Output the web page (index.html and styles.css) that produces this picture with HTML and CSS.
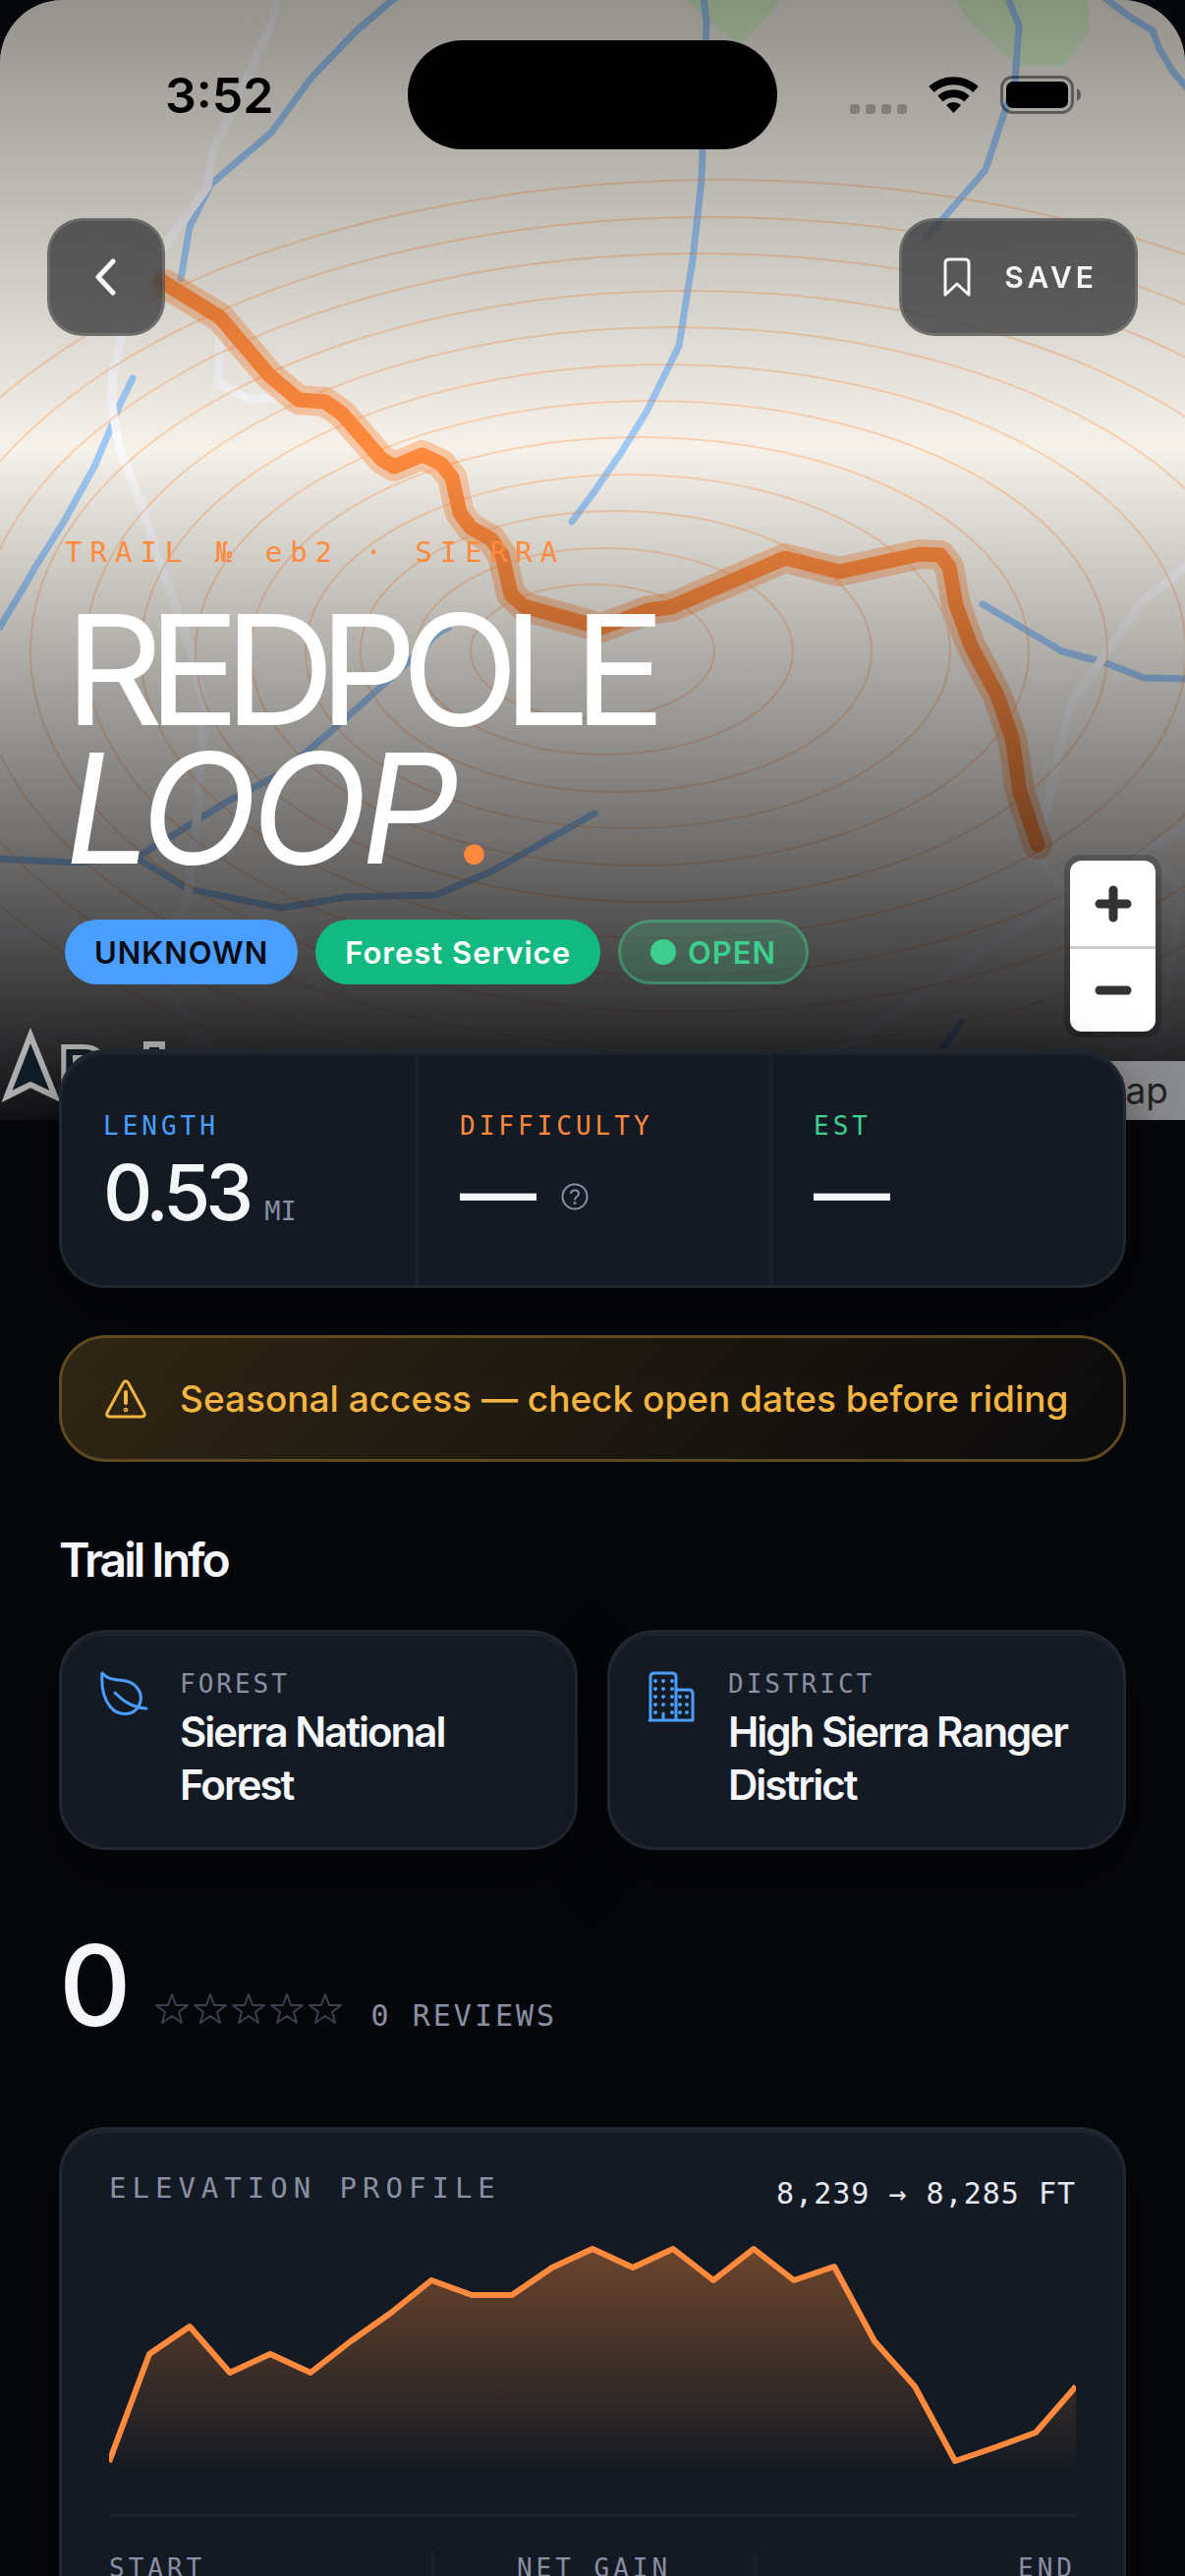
FILE: index.html
```html
<!DOCTYPE html>
<html lang="en">
<head>
  <meta charset="UTF-8">
  <meta name="viewport" content="width=device-width, initial-scale=1">
  <title>Redpole Loop</title>
  <link rel="stylesheet" href="styles.css">
</head>
<body>
<div class="screen">
  <header class="hero">
    <!-- Map -->
    <svg class="map" viewBox="0 0 1206 1140" preserveAspectRatio="xMidYMid slice" aria-hidden="true">
      <rect width="1206" height="1140" fill="#f6f2ea"/>
      <g class="woods">
        <path d="M699 0H795L755 46L747 43Z"/>
        <path d="M974 0L984 20L1034 67H1081L1109 33L1107 0Z"/>
      </g>
      <g class="river">
        <path d="M404 -4L363 31L317 79L276 135L215 187L193 231L184 284"/>
        <path d="M135 385L121 414L111 440L96 475L65 531L36 577L24 598L0 638"/>
        <path d="M716 -4L719 24L715 152L714 183L705 264L691 352L658 419L632 461L603 503L582 531"/>
        <path d="M1025 -4L1037 26L1033 83L1022 115L1003 173L940 245"/>
        <path d="M1122 -4L1151 18L1173 31L1180 50L1193 72L1212 94"/>
        <path d="M1000 615L1081 663L1126 675L1164 690L1212 691"/>
        <path d="M456 639Q440 646 434 657L369 716L329 751L286 787L231 816L142 871L79 878L-4 874"/>
        <path d="M142 875L192 905L286 924L354 913L444 911L500 887L605 828"/>
        <path d="M978 1040L950 1080"/>
      </g>
      <g class="road">
        <path d="M281 -4L278 20L250 83L216 155L211 190L168 250L135 295L123 342L115 381L114 414L122 457L144 514L165 580L192 655L208 720L200 838L192 906L183 936L150 985L180 1020L215 1080"/>
        <path d="M224 335L222 390L254 407L290 403"/>
        <path d="M467 480L485 530L500 560"/>
        <path d="M1212 572L1163 612L1090 716L1063 830L1057 875L1084 908"/>
        <path d="M1212 838L1084 914L961 993L857 1069"/>
        <path d="M1160 880Q1200 880 1200 920L1180 1080"/>
        <path d="M-4 953L96 940L183 936"/>
      </g>
      <g class="contour">
        <ellipse cx="603" cy="663" rx="124" ry="68"/>
        <ellipse cx="615" cy="663" rx="192" ry="105"/>
        <ellipse cx="627" cy="663" rx="260" ry="143"/>
        <ellipse cx="639" cy="663" rx="328" ry="180"/>
        <ellipse cx="651" cy="663" rx="396" ry="218"/>
        <ellipse cx="663" cy="663" rx="464" ry="255"/>
        <ellipse cx="675" cy="663" rx="532" ry="292"/>
        <ellipse cx="687" cy="663" rx="600" ry="330"/>
        <ellipse cx="699" cy="663" rx="668" ry="367"/>
        <ellipse cx="711" cy="663" rx="736" ry="405"/>
        <ellipse cx="723" cy="663" rx="804" ry="442"/>
        <ellipse cx="735" cy="663" rx="872" ry="480"/>
      </g>
      <path class="trail-halo" d="M168 289L224 323L274 382L304 407L331 409L348 421L388 467L401 475L430 463L449 472L460 486L468 522L479 537L500 549L511 565L520 605L533 617L612 639L660 621L683 618L799 568L854 582L936 564L957 565L966 577L973 616L988 657L1015 708L1030 751L1038 806L1056 860"/>
      <path class="trail" d="M164 286L224 323L274 382L304 407L331 409L348 421L388 467L401 475L430 463L449 472L460 486L468 522L479 537L500 549L511 565L520 605L533 617L612 639L660 621L683 618L799 568L854 582L936 564L957 565L966 577L973 616L988 657L1015 708L1030 751L1038 806L1056 860"/>
    </svg>
    <div class="shade"></div>

    <!-- Map provider mark -->
    <svg class="map-logo" width="180" height="100" viewBox="0 0 180 100" aria-hidden="true">
      <path d="M31 14L56 76L31 64L7 76Z"/>
      <text x="61" y="80">R</text>
      <path d="M149 78V23H165V78Z"/>
    </svg>
    <a class="attribution" href="#">Map</a>

    <div class="statusbar">
      <span class="time">3:52</span>
      <span class="island"></span>
      <div class="status-icons">
        <span class="dots"><i></i><i></i><i></i><i></i></span>
        <svg width="51" height="37" viewBox="0 0 51 37">
          <path d="M3 13A33 33 0 0 1 48 13M12 22.5A20 20 0 0 1 39 22.5" fill="none" stroke="#000" stroke-width="8"/>
          <path d="M25.500 37L18 29A11 11 0 0 1 33 29Z"/>
        </svg>
        <svg width="82" height="39" viewBox="0 0 82 39">
          <rect x="1.500" y="1.500" width="72" height="36" rx="11" fill="none" stroke="#000" stroke-opacity=".45" stroke-width="3"/>
          <rect x="6" y="6" width="63" height="27" rx="7"/>
          <path d="M78 13Q82 15 82 19.500Q82 24 78 26Z" fill-opacity=".45"/>
        </svg>
      </div>
    </div>

    <nav class="topnav">
      <button class="glass back" type="button" aria-label="Back">
        <svg width="22" height="38" viewBox="0 0 22 38"><path d="M18 3L3 19L18 35"/></svg>
      </button>
      <button class="glass save" type="button">
        <svg width="28" height="40" viewBox="0 0 28 40"><path d="M2 38V6Q2 2 6 2H22Q26 2 26 6V38L14 27Z"/></svg>
        SAVE
      </button>
    </nav>

    <div class="headline">
      <p class="eyebrow">TRAIL № eb2 · SIERRA</p>
      <h1>REDPOLE<br><em>LOOP</em><span class="dot">.</span></h1>
      <div class="pills">
        <span class="pill unknown">UNKNOWN</span>
        <span class="pill service">Forest Service</span>
        <span class="pill open"><i></i>OPEN</span>
      </div>
    </div>

    <div class="zoom">
      <button type="button" aria-label="Zoom in"><svg width="38" height="38" viewBox="0 0 38 38"><path d="M5 19H33M19 5V33"/></svg></button>
      <button type="button" aria-label="Zoom out"><svg width="38" height="38" viewBox="0 0 38 38"><path d="M5 19H33"/></svg></button>
    </div>
  </header>

  <main>
    <section class="card stats">
      <div class="stat">
        <h2 class="blue">LENGTH</h2>
        <p class="value">0.53<small>MI</small></p>
      </div>
      <div class="stat">
        <h2 class="orange">DIFFICULTY</h2>
        <p class="value">—
          <svg width="28" height="28" viewBox="0 0 28 28" aria-label="About difficulty">
            <circle cx="14" cy="14" r="12.500"/>
            <path d="M10 11Q10 7.500 14 7.500Q18 7.500 18 11Q18 13 15.500 14.500Q14 15.500 14 17.500"/>
            <circle cx="14" cy="20.500" r=".6"/>
          </svg>
        </p>
      </div>
      <div class="stat">
        <h2 class="green">EST</h2>
        <p class="value">—</p>
      </div>
    </section>

    <section class="notice">
      <svg width="42" height="40" viewBox="0 0 42 40" aria-hidden="true">
        <path d="M18.500 3.500Q21 0 23.500 3.500L40 34Q41 38 37 38H5Q1 38 2 34Z"/>
        <path d="M21 13V24" stroke-width="4"/>
        <circle cx="21" cy="31" r=".8"/>
      </svg>
      <p>Seasonal access — check open dates before riding</p>
    </section>

    <h2 class="section-title">Trail Info</h2>
    <section class="info">
      <div class="card info-card">
        <svg width="50" height="46" viewBox="0 0 50 46" aria-hidden="true">
          <path d="M3 2C10 10 18 8 27 10C40 13 46 25 40 36C34 46 19 46 11 36C4 27 2 14 3 2Z"/>
          <path d="M16 22C24 30 33 37 48 38"/>
        </svg>
        <div>
          <h3>FOREST</h3>
          <p>Sierra National Forest</p>
        </div>
      </div>
      <div class="card info-card">
        <svg width="50" height="52" viewBox="0 0 50 52" aria-hidden="true">
          <path d="M3 50V6Q3 2 7 2H25Q29 2 29 6V50M29 19H42Q46 19 46 23V50H2M16 50V43"/>
          <path class="windows" d="M8 10V46M16 10V40M25 10V46M33 26V46M40 26V46"/>
        </svg>
        <div>
          <h3>DISTRICT</h3>
          <p>High Sierra Ranger District</p>
        </div>
      </div>
    </section>

    <section class="reviews">
      <span class="score">0</span>
      <svg class="stars" width="192" height="34" viewBox="0 0 192 34" aria-hidden="true">
        <defs>
          <path id="star" d="M18 2L22 13H34L25 20L28 31L18 24L8 31L11 20L2 13H14Z"/>
        </defs>
        <use href="#star"/>
        <use href="#star" x="39"/>
        <use href="#star" x="78"/>
        <use href="#star" x="117"/>
        <use href="#star" x="156"/>
      </svg>
      <span class="count">0 REVIEWS</span>
    </section>

    <section class="card elevation">
      <div class="elevation-head">
        <h2>ELEVATION PROFILE</h2>
        <span>8,239 → 8,285 FT</span>
      </div>
      <svg class="chart" viewBox="0 0 984 240" preserveAspectRatio="none" aria-hidden="true">
        <defs>
          <linearGradient id="fill" x1="0" y1="0" x2="0" y2="1">
            <stop offset="0" stop-color="#ff8a3d" stop-opacity=".38"/>
            <stop offset="1" stop-color="#ff8a3d" stop-opacity="0"/>
          </linearGradient>
        </defs>
        <path fill="url(#fill)" d="M0 227L41 117L82 89L123 136L164 117L205 136L246 104L287 75L328 42L369 57H410L451 29L492 10L533 29L574 10L615 42L656 10L697 42L738 28L779 104L820 150L861 226L902 212L943 197L984 150V238H0Z"/>
        <path class="line" d="M0 227L41 117L82 89L123 136L164 117L205 136L246 104L287 75L328 42L369 57H410L451 29L492 10L533 29L574 10L615 42L656 10L697 42L738 28L779 104L820 150L861 226L902 212L943 197L984 150"/>
      </svg>
      <div class="elevation-stats">
        <span>START</span>
        <span>NET GAIN</span>
        <span>END</span>
      </div>
    </section>
  </main>
</div>
</body>
</html>
```
FILE: styles.css
```css
* {
  box-sizing: border-box;
}
body {
  margin: 0;
  background: #06070b;
  color: #f5f6fa;
  font-family: Inter, "Liberation Sans", sans-serif;
}
h1, h2, h3, p {
  margin: 0;
}
button {
  font-family: inherit;
  cursor: pointer;
}
svg {
  display: block;
  flex: none;
}
.screen {
  height: 100vh;
  overflow: hidden;
}

/* Hero */
.hero {
  position: relative;
  padding: 41px 48px 138px;
  border-radius: 64px 64px 0 0;
  overflow: hidden;
}
.map, .shade {
  position: absolute;
  inset: 0;
  width: 100%;
  height: 100%;
}
.shade {
  background: linear-gradient(rgba(0,0,0,0.4), rgba(0,0,0,0) 40%, rgba(5,6,10,0.95));
}
.woods {
  fill: #dbf6cd;
}
.river, .road, .contour, .trail, .trail-halo {
  fill: none;
  stroke-linecap: round;
  stroke-linejoin: round;
}
.river {
  stroke: #a0caf6;
  stroke-width: 7;
}
.road {
  stroke: #fafafc;
  stroke-width: 9;
}
.contour {
  stroke: #ff8a3d;
  stroke-opacity: 0.3;
  stroke-width: 2;
}
.trail-halo {
  stroke: #ff8a3d;
  stroke-opacity: 0.4;
  stroke-width: 30;
}
.trail {
  stroke: #ff8a3d;
  stroke-width: 15;
}
.map-logo {
  position: absolute;
  left: 0;
  bottom: 0;
  fill: #101d27;
  stroke: #b0b0b0;
  stroke-width: 6;
}
.map-logo text {
  font-size: 72px;
  paint-order: stroke;
  stroke-width: 10;
}
.attribution {
  position: absolute;
  right: 0;
  bottom: 0;
  padding: 0 17px;
  background: #8b8c8e;
  color: #222;
  font-size: 37px;
  line-height: 60px;
  text-decoration: none;
}

.statusbar {
  position: relative;
  display: grid;
  grid-template-columns: 1fr 376px 1fr;
  align-items: center;
  margin: 0 -48px;
  color: #000;
}
.time {
  padding-left: 168px;
  font-size: 50px;
  line-height: 60px;
  font-weight: 600;
}
.island {
  height: 111px;
  border-radius: 56px;
  background: #000;
}
.status-icons {
  display: flex;
  justify-content: flex-end;
  align-items: center;
  gap: 22px;
  padding-right: 106px;
}
.dots {
  display: flex;
  align-self: flex-end;
  gap: 6px;
}
.dots i {
  width: 10px;
  height: 10px;
  border-radius: 3px;
  background: rgba(0,0,0,0.24);
}

.topnav {
  position: relative;
  display: flex;
  justify-content: space-between;
  margin-top: 70px;
}
.glass {
  display: flex;
  align-items: center;
  justify-content: center;
  gap: 34px;
  height: 120px;
  border: 3px solid rgba(255,255,255,0.12);
  border-radius: 36px;
  background: rgba(20,22,26,0.64);
  backdrop-filter: blur(30px);
  color: #f5f6fa;
  font-size: 30px;
  font-weight: 600;
  letter-spacing: 4px;
}
.glass path {
  fill: none;
  stroke: #f5f6fa;
  stroke-width: 3;
  stroke-linejoin: round;
}
.back {
  width: 120px;
  padding: 0;
}
.back path {
  stroke-width: 5;
  stroke-linecap: round;
}
.save {
  padding: 0 38px 0 42px;
}

.headline {
  position: relative;
  margin: 200px 0 0 18px;
}
.eyebrow, .stat h2, .value small, .info-card h3, .count, .elevation {
  font-family: "DejaVu Sans Mono", "Liberation Mono", monospace;
  font-weight: 400;
}
.eyebrow {
  color: #ff8a3d;
  font-size: 29px;
  line-height: 40px;
  letter-spacing: 8px;
}
h1 {
  margin-top: 29px;
  color: #fff;
  font-size: 156px;
  line-height: 141px;
  font-weight: 400;
  letter-spacing: -16px;
}
h1 em {
  letter-spacing: -7px;
}
.dot {
  color: #ff8a3d;
}
.pills {
  display: flex;
  gap: 18px;
  margin-top: 43px;
}
.pill {
  display: flex;
  align-items: center;
  height: 66px;
  padding: 0 30px;
  border-radius: 33px;
  font-size: 31px;
  font-weight: 600;
  letter-spacing: 1px;
}
.unknown {
  background: #4a9eff;
  color: #0a0d14;
}
.service {
  background: #12b981;
  color: #fff;
}
.open {
  gap: 12px;
  border: 3px solid rgba(62,207,142,0.4);
  background: rgba(62,207,142,0.2);
  color: #3ecf8e;
}
.open i {
  width: 26px;
  height: 26px;
  border-radius: 50%;
  background: #3ecf8e;
}

.zoom {
  position: absolute;
  right: 24px;
  bottom: 84px;
  border: 6px solid rgba(0,0,0,0.2);
  border-radius: 16px;
}
.zoom button {
  display: flex;
  align-items: center;
  justify-content: center;
  width: 87px;
  height: 84px;
  padding: 0;
  border: 0;
  border-radius: 0 0 12px 12px;
  background: #fff;
}
.zoom button:first-child {
  height: 90px;
  border-bottom: 3px solid #ccc;
  border-radius: 12px 12px 0 0;
}
.zoom path {
  stroke: #333;
  stroke-width: 9;
  stroke-linecap: round;
}

/* Content */
main {
  position: relative;
  padding: 0 60px;
}
.card {
  border: 3px solid #21262f;
  border-radius: 48px;
  background: #131a23;
  box-shadow: inset 0 3px 0 #1d222d, 0 24px 60px rgba(0,0,0,0.5);
}
.stats {
  display: grid;
  grid-template-columns: repeat(3, 1fr);
  margin-top: -72px;
}
.stat {
  padding: 55px 42px 54px;
}
.stat + .stat {
  border-left: 3px solid #1c222c;
}
.stat h2 {
  font-size: 26px;
  line-height: 40px;
  letter-spacing: 4px;
}
.blue {
  color: #4a9eff;
}
.orange {
  color: #ff8a3d;
}
.green {
  color: #3ecf8e;
}
.value {
  display: flex;
  align-items: baseline;
  margin-top: 8px;
  font-size: 78px;
  line-height: 80px;
  font-weight: 500;
  letter-spacing: -5px;
}
.value small {
  margin-left: 16px;
  color: #8a8fa3;
  font-size: 27px;
  line-height: 32px;
  letter-spacing: 0;
}
.value svg {
  align-self: center;
  margin: 8px 0 0 30px;
  fill: none;
  stroke: #8a8fa3;
  stroke-width: 2;
}

.notice {
  display: flex;
  align-items: center;
  gap: 34px;
  margin-top: 48px;
  padding: 32px 44px;
  border: 3px solid #5f4a20;
  border-radius: 48px;
  background: linear-gradient(135deg, rgba(244,180,65,0.18), rgba(244,180,65,0.02));
  color: #f4b441;
}
.notice svg {
  fill: none;
  stroke: #f4b441;
  stroke-width: 3;
  stroke-linecap: round;
}
.notice p {
  font-size: 37px;
  line-height: 59px;
  font-weight: 500;
}

.section-title {
  margin-top: 70px;
  font-size: 48px;
  line-height: 60px;
  font-weight: 600;
  letter-spacing: -3px;
}
.info {
  display: grid;
  grid-template-columns: 1fr 1fr;
  gap: 30px;
  margin-top: 41px;
}
.info-card {
  display: flex;
  gap: 32px;
  padding: 36px 38px;
}
.info-card svg {
  margin-top: 3px;
  fill: none;
  stroke: #4a9eff;
  stroke-width: 3;
  stroke-linecap: round;
  stroke-linejoin: round;
}
.info-card .windows {
  stroke-width: 4;
  stroke-dasharray: 0 8;
}
.info-card h3 {
  color: #8a8fa3;
  font-size: 26px;
  line-height: 32px;
  letter-spacing: 3px;
}
.info-card p {
  margin-top: 6px;
  font-size: 42px;
  line-height: 54px;
  font-weight: 600;
  letter-spacing: -2px;
}

.reviews {
  display: flex;
  align-items: baseline;
  gap: 29px;
  margin-top: 72px;
}
.score {
  font-size: 114px;
  line-height: 132px;
  font-weight: 500;
  letter-spacing: -6px;
}
.stars {
  fill: none;
  stroke: #3a404e;
  stroke-width: 2;
  stroke-linejoin: round;
}
.count {
  color: #8a8fa3;
  font-size: 30px;
  letter-spacing: 3px;
}

.elevation {
  margin-top: 78px;
  padding: 39px 48px 100px;
}
.elevation-head {
  display: flex;
  justify-content: space-between;
}
.elevation-head h2 {
  color: #8a8fa3;
  font-size: 29px;
  line-height: 40px;
  font-weight: 400;
  letter-spacing: 6px;
}
.elevation-head span {
  padding-top: 6px;
  color: #e6e9f2;
  font-size: 30px;
  line-height: 40px;
  letter-spacing: 1px;
}
.chart {
  width: 100%;
  height: 240px;
  margin-top: 26px;
}
.chart .line {
  fill: none;
  stroke: #ff8a3d;
  stroke-width: 6;
  stroke-linejoin: round;
}
.elevation-stats {
  display: grid;
  grid-template-columns: repeat(3, 1fr);
  margin-top: 40px;
  padding-top: 36px;
  border-top: 3px solid #1c222c;
  color: #8a8fa3;
  font-size: 26px;
  line-height: 32px;
  letter-spacing: 4px;
}
.elevation-stats span {
  min-height: 100px;
}
.elevation-stats span + span {
  border-left: 3px solid #1c222c;
  text-align: center;
}
.elevation-stats span:last-child {
  text-align: right;
}
```
